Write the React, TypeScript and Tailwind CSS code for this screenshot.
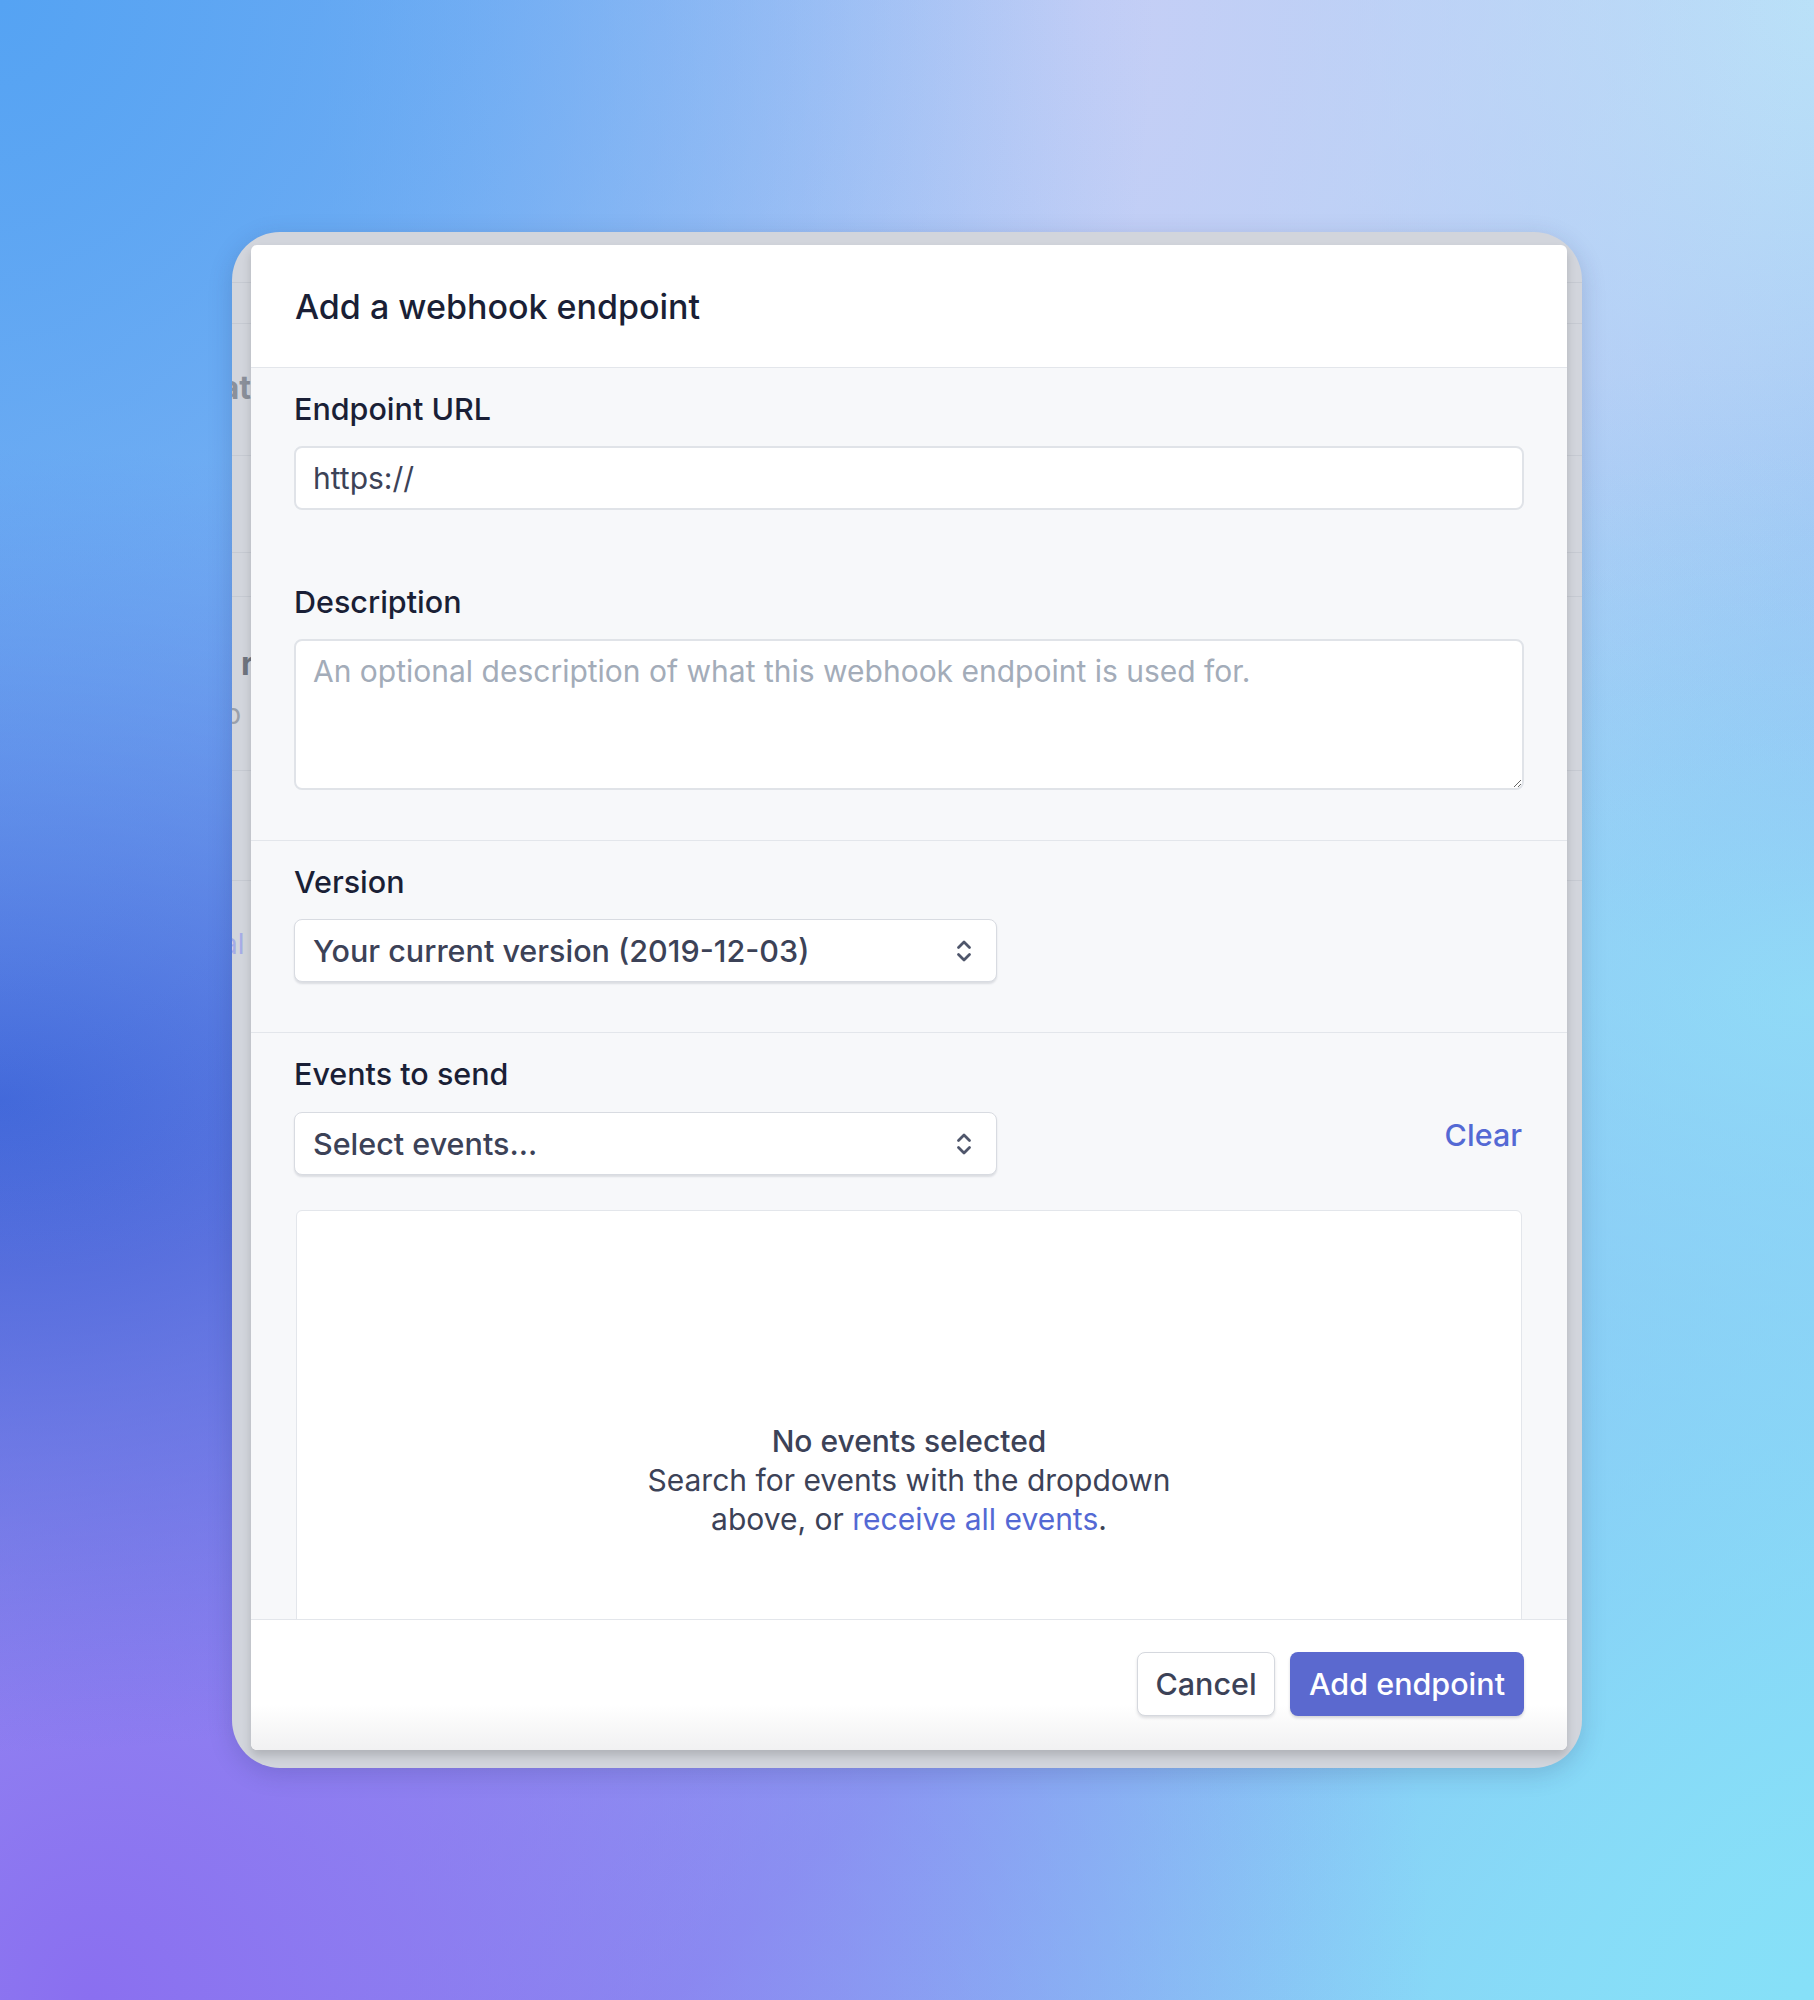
import React from "react";

function Chevrons() {
  return (
    <svg width="16" height="26" viewBox="0 0 16 26" fill="none" className="shrink-0">
      <path d="M2.5 9.5 L8 4 L13.5 9.5" stroke="#4f566b" strokeWidth="2.8" strokeLinecap="round" strokeLinejoin="round" />
      <path d="M2.5 16.5 L8 22 L13.5 16.5" stroke="#4f566b" strokeWidth="2.8" strokeLinecap="round" strokeLinejoin="round" />
    </svg>
  );
}

function SelectBox({ label }: { label: string }) {
  return (
    <div className="w-[703px] h-[63px] bg-white rounded-[8px] border border-[#d8dbe1] shadow-[0_2px_2px_rgba(60,66,87,0.14)] flex items-center justify-between pl-[18px] pr-[24px]">
      <span className="text-[30.5px] font-medium text-[#3c4257]">{label}</span>
      <Chevrons />
    </div>
  );
}

function Label({ children }: { children: React.ReactNode }) {
  return (
    <div className="text-[30.5px] leading-[36px] font-medium text-[#1a1f36]">{children}</div>
  );
}

export default function App() {
  return (
    <div className="w-[1814px] h-[2000px] overflow-hidden pt-[232px] pl-[232px] font-['Inter','Noto_Sans',sans-serif] bg-[radial-gradient(ellipse_at_0%_0%,#55a3f3_0%,transparent_45%),radial-gradient(ellipse_at_0%_55%,#4060d6_0%,transparent_42%),radial-gradient(ellipse_at_5%_100%,#8a6ff0_0%,transparent_55%),radial-gradient(ellipse_at_100%_100%,#86e0f8_0%,transparent_55%),radial-gradient(ellipse_at_100%_50%,#96d6f6_0%,transparent_45%),radial-gradient(ellipse_at_60%_0%,#c6cff6_0%,transparent_50%),radial-gradient(ellipse_at_100%_0%,#b9e2f8_0%,transparent_40%),linear-gradient(135deg,#7fb0f2_0%,#a9c6f4_40%,#8c98f0_70%,#8cd8f6_100%)]">
      {/* blurred page frame */}
      <div className="relative w-[1350px] h-[1536px] rounded-[48px] overflow-hidden bg-[#d2d5dc] shadow-[0_6px_24px_rgba(30,40,90,0.18)] pt-[13px] pl-[19px]">
        {/* page content behind the modal */}
        <div className="absolute left-0 top-[50px] w-full h-px bg-[#c6cad2]" />
        <div className="absolute left-0 top-[91px] w-full h-px bg-[#c6cad2]" />
        <div className="absolute left-0 top-[223px] w-full h-px bg-[#c6cad2]" />
        <div className="absolute left-0 top-[320px] w-full h-px bg-[#c6cad2]" />
        <div className="absolute left-0 top-[364px] w-full h-px bg-[#c6cad2]" />
        <div className="absolute left-0 top-[538px] w-full h-px bg-[#c6cad2]" />
        <div className="absolute left-0 top-[648px] w-full h-px bg-[#c6cad2]" />
        <div className="absolute left-[-200px] w-[219px] top-[140px] text-right text-[32px] font-bold text-[#8b909a] leading-none">
          Format
        </div>
        <div className="absolute left-[-200px] w-[222px] top-[416px] text-right text-[32px] font-bold text-[#6f747e] leading-none">
          r
        </div>
        <div className="absolute left-[-8px] top-[468px] text-[28px] text-[#9aa0aa] leading-none">p</div>
        <div className="absolute left-[-10px] top-[698px] text-[28px] text-[#a5ace6] leading-none">al</div>

        {/* modal */}
        <div className="relative z-10 w-[1316px] h-[1505px] bg-white rounded-[6px] overflow-hidden flex flex-col shadow-[0_6px_10px_rgba(0,0,0,0.16)]">
          <div className="h-[123px] shrink-0 border-b border-[#e3e6eb] flex items-center pl-[44px]">
            <h2 className="text-[34px] font-medium text-[#1a1f36]">Add a webhook endpoint</h2>
          </div>

          <div className="flex-1 overflow-hidden bg-[#f7f8fa]">
            {/* url + description */}
            <div className="px-[43px] pt-[23px] pb-[50px] border-b border-[#e3e6eb]">
              <Label>Endpoint URL</Label>
              <input
                defaultValue="https://"
                className="mt-[19px] w-full h-[64px] bg-white rounded-[8px] border-2 border-[#e0e3e8] px-[17px] text-[30px] text-[#3c4257] outline-none"
              />
              <div className="mt-[74px]">
                <Label>Description</Label>
              </div>
              <textarea
                placeholder="An optional description of what this webhook endpoint is used for."
                className="mt-[19px] block w-full h-[151px] bg-white rounded-[8px] border-2 border-[#e0e3e8] px-[17px] pt-[10px] text-[30px] leading-[40px] text-[#3c4257] placeholder:text-[#a3acb9] outline-none"
              />
            </div>

            {/* version */}
            <div className="px-[43px] pt-[23px] pb-[50px] border-b border-[#e3e6eb]">
              <Label>Version</Label>
              <div className="mt-[19px]">
                <SelectBox label="Your current version (2019-12-03)" />
              </div>
            </div>

            {/* events */}
            <div className="px-[43px] pt-[23px]">
              <Label>Events to send</Label>
              <div className="mt-[20px] flex items-start justify-between">
                <SelectBox label="Select events..." />
                <button className="mt-[5px] mr-[2px] text-[30.5px] leading-[36px] font-medium text-[#5469d4]">
                  Clear
                </button>
              </div>
              <div className="mt-[35px] mx-[2px] h-[540px] bg-white border border-[#e3e6eb] rounded-t-[6px] flex flex-col items-center justify-center text-center text-[30px] leading-[39px] text-[#3c4257]">
                <div className="font-medium">No events selected</div>
                <div>Search for events with the dropdown</div>
                <div>
                  above, or <span className="text-[#5469d4]">receive all events</span>.
                </div>
              </div>
            </div>
          </div>

          <div className="h-[131px] shrink-0 border-t border-[#e3e6eb] bg-[linear-gradient(to_bottom,#ffffff_0%,#ffffff_65%,#f1f1f2_100%)] flex items-start justify-end pt-[32px] pr-[43px] gap-[15px]">
            <button className="w-[138px] h-[64px] rounded-[8px] bg-white border border-[#d5d8de] shadow-[0_2px_3px_rgba(60,66,87,0.16)] text-[30.5px] font-medium text-[#3c4257]">
              Cancel
            </button>
            <button className="w-[234px] h-[64px] rounded-[8px] bg-[#5b69cf] shadow-[0_2px_3px_rgba(60,66,87,0.2)] text-[30.5px] font-medium text-white">
              Add endpoint
            </button>
          </div>
        </div>
      </div>
    </div>
  );
}
